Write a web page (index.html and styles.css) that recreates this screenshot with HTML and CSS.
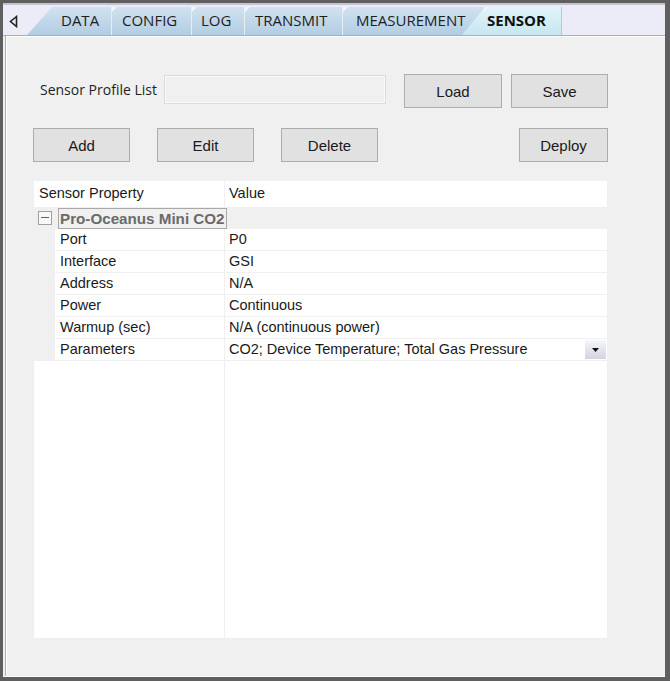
FILE: index.html
```html
<!DOCTYPE html>
<html lang="en">
<head>
    <meta charset="UTF-8">
    <title>Sensor</title>
    <link rel="stylesheet" href="styles.css">
</head>
<body>
    <div class="window">
        <div class="tabstrip">
            <span class="scroll-left">
                <svg width="9" height="13" viewBox="0 0 9 13"><path d="M7.5 1.5 L1.5 6.5 L7.5 11.5 Z" fill="none" stroke="#222" stroke-width="1.6" stroke-linejoin="miter"/></svg>
            </span>
            <div class="tab tab-first">DATA</div>
            <div class="tab tab-config">CONFIG</div>
            <div class="tab tab-log">LOG</div>
            <div class="tab tab-transmit">TRANSMIT</div>
            <div class="tab tab-measure">MEASUREMENT</div>
            <div class="tab tab-active">SENSOR</div>
        </div>

        <div class="panel">
            <div class="profile-row">
                <span class="profile-label">Sensor Profile List</span>
                <div class="profile-input"></div>
                <button class="btn btn-load">Load</button>
                <button class="btn btn-save">Save</button>
            </div>

            <div class="action-row">
                <button class="btn">Add</button>
                <button class="btn">Edit</button>
                <button class="btn">Delete</button>
                <button class="btn btn-deploy">Deploy</button>
            </div>

            <div class="grid">
                <div class="grid-head">
                    <div class="col-name">Sensor Property</div>
                    <div class="col-value">Value</div>
                </div>
                <div class="grid-cat">
                    <span class="collapse-box"></span>
                    <span class="cat-title">Pro-Oceanus Mini CO2</span>
                </div>
                <div class="grid-row">
                    <div class="col-name">Port</div>
                    <div class="col-value">P0</div>
                </div>
                <div class="grid-row">
                    <div class="col-name">Interface</div>
                    <div class="col-value">GSI</div>
                </div>
                <div class="grid-row">
                    <div class="col-name">Address</div>
                    <div class="col-value">N/A</div>
                </div>
                <div class="grid-row">
                    <div class="col-name">Power</div>
                    <div class="col-value">Continuous</div>
                </div>
                <div class="grid-row">
                    <div class="col-name">Warmup (sec)</div>
                    <div class="col-value">N/A (continuous power)</div>
                </div>
                <div class="grid-row">
                    <div class="col-name">Parameters</div>
                    <div class="col-value">CO2; Device Temperature; Total Gas Pressure
                        <span class="drop-btn"><svg width="7" height="4" viewBox="0 0 7 4"><path d="M0 0 H7 L3.5 4 Z" fill="#111"/></svg></span>
                    </div>
                </div>
                <div class="grid-empty">
                    <div class="col-name"></div>
                    <div class="col-value"></div>
                </div>
            </div>
        </div>
    </div>
</body>
</html>
```

FILE: styles.css
```css
body {
    margin: 0;
    height: 681px;
    overflow: hidden;
    background: #5f5f60;
    font-family: "Liberation Sans", Arial, sans-serif;
}
.window {
    margin: 3px 5px 0 3px;
    height: 673px;
    background: #f0f0f0;
    display: flex;
    flex-direction: column;
    border-bottom: 1px solid #ffffff;
}
.tabstrip {
    height: 30px;
    flex: none;
    display: flex;
    align-items: flex-end;
    background: #ececf8;
    border-top: 2px solid #c4c4cc;
    border-bottom: 1px solid #a4b0bc;
    position: relative;
}
.scroll-left {
    position: absolute;
    left: 6px;
    top: 9px;
}
.tab {
    height: 28px;
    box-sizing: border-box;
    font-family: "Open Sans", "Noto Sans", sans-serif;
    font-size: 15px;
    color: #1e1e1e;
    line-height: 27px;
    background: linear-gradient(#d0e2f0, #b2cde2);
    border-left: 1px solid #e8eef6;
    position: relative;
    white-space: nowrap;
}
.tab::before {
    content: "";
    position: absolute;
    left: 0;
    top: 0;
    border-top: 5px solid #f4f4fa;
    border-right: 5px solid transparent;
}
.tab-first {
    margin-left: 24px;
    width: 84px;
    padding-left: 34px;
    border-left: none;
    clip-path: polygon(25px 0, 100% 0, 100% 100%, 0 100%);
}
.tab-first::before {
    display: none;
}
.tab-config {
    width: 80px;
    padding-left: 10px;
}
.tab-log {
    width: 53px;
    padding-left: 9px;
}
.tab-transmit {
    width: 98px;
    padding-left: 10px;
}
.tab-measure {
    width: 143px;
    padding-left: 13px;
    overflow: hidden;
}
.tab-active {
    width: 100px;
    margin-left: -23px;
    padding-left: 25px;
    font-weight: bold;
    color: #111;
    border-left: none;
    background: linear-gradient(#e2f4fa, #c6e6f0);
    clip-path: polygon(23px 0, 100% 0, 100% 100%, 0 100%);
    z-index: 1;
    border-right: 1px solid #b8c8d4;
}
.tab-active::before {
    left: 22px;
}
.panel {
    flex: 1;
    border-left: 1px solid #a8b0b8;
    box-shadow: inset 1px 1px 0 #ffffff;
    margin-left: 2px;
    padding: 38px 0 0 0;
}
.btn {
    height: 34px;
    box-sizing: border-box;
    background: #e1e1e1;
    border: 1px solid #adadad;
    font-family: "Liberation Sans", Arial, sans-serif;
    font-size: 15px;
    color: #1a1a1a;
    padding: 0;
}
.profile-row {
    display: flex;
    align-items: center;
    padding-left: 34px;
}
.profile-label {
    font-family: "Open Sans", "Noto Sans", sans-serif;
    font-size: 14px;
    color: #1e1e1e;
    width: 124px;
    margin-top: -4px;
}
.profile-input {
    width: 222px;
    height: 29px;
    box-sizing: border-box;
    border: 1px solid #dcdcdc;
    box-shadow: inset 0 0 0 1px #fafafa;
    background: #f0f0f0;
    margin-top: -3px;
}
.btn-load {
    width: 98px;
    margin-left: 18px;
}
.btn-save {
    width: 97px;
    margin-left: 9px;
}
.action-row {
    display: flex;
    gap: 27px;
    padding-left: 27px;
    width: 575px;
    margin-top: 20px;
}
.action-row .btn {
    width: 97px;
}
.action-row .btn-deploy {
    width: 89px;
    margin-left: auto;
}
.grid {
    margin: 19px 0 0 28px;
    width: 573px;
    height: 457px;
    background: #ffffff;
    display: flex;
    flex-direction: column;
    font-size: 14.5px;
    color: #1a1a1a;
}
.grid-head,
.grid-row,
.grid-empty {
    display: flex;
}
.grid-head {
    height: 26px;
    line-height: 25px;
}
.grid-head .col-name {
    padding-left: 5px;
}
.col-name {
    width: 191px;
    flex: none;
    box-sizing: border-box;
    border-right: 1px solid #f0f0f0;
}
.col-value {
    flex: 1;
    padding-left: 4px;
    position: relative;
}
.grid-cat {
    height: 22px;
    background: #f0f0f0;
    display: flex;
    align-items: center;
}
.collapse-box {
    width: 12px;
    height: 12px;
    margin-left: 4px;
    border: 1px solid #a0a0a0;
    background: #f8f8f8;
    position: relative;
}
.collapse-box::after {
    content: "";
    position: absolute;
    left: 2px;
    right: 2px;
    top: 5px;
    height: 1px;
    background: #606060;
}
.cat-title {
    margin-left: 6px;
    border: 1px solid #a8a8a8;
    height: 21px;
    line-height: 19px;
    padding: 0 1px;
    width: 169px;
    box-sizing: border-box;
    font-size: 15.2px;
    font-weight: bold;
    color: #6a6a6a;
    white-space: nowrap;
}
.grid-row {
    height: 22px;
    line-height: 20px;
    border-left: 21px solid #f0f0f0;
}
.grid-row .col-name {
    width: 170px;
    padding-left: 5px;
    border-bottom: 1px solid #f0f0f0;
}
.grid-row .col-value {
    border-bottom: 1px solid #f0f0f0;
}
.drop-btn {
    position: absolute;
    right: 1px;
    top: 1px;
    width: 21px;
    height: 19px;
    background: linear-gradient(#f6f6fc, #d4d4e0);
    display: flex;
    align-items: center;
    justify-content: center;
}
.grid-empty {
    flex: 1;
}
```
